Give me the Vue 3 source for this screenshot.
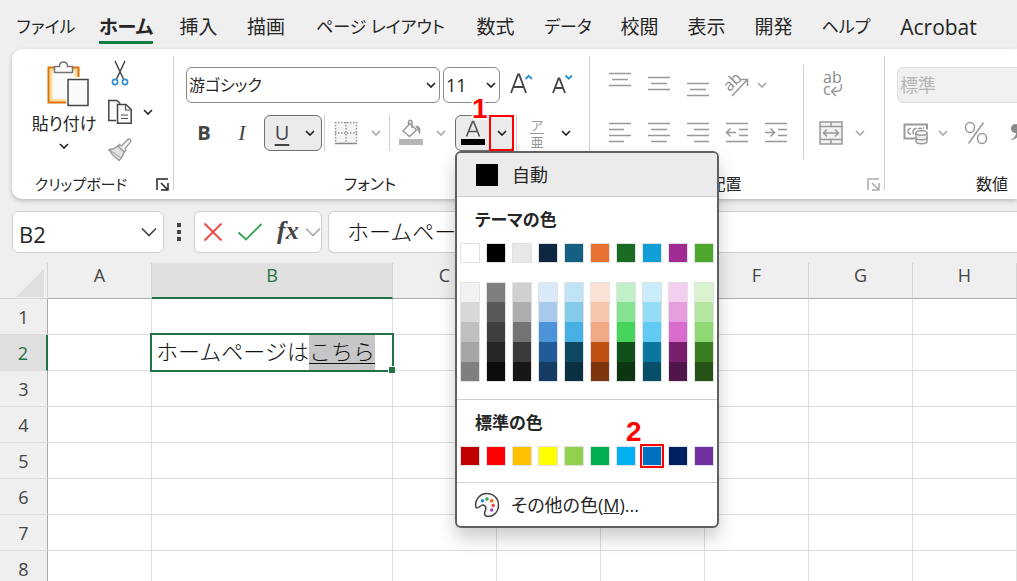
<script setup>
import { ref } from 'vue'

const tabs = [
  { name: 'ファイル', kind: 'kana' },
  { name: 'ホーム' },
  { name: '挿入' },
  { name: '描画' },
  { name: 'ページ レイアウト', kind: 'kana' },
  { name: '数式' },
  { name: 'データ', kind: 'kana' },
  { name: '校閲' },
  { name: '表示' },
  { name: '開発' },
  { name: 'ヘルプ', kind: 'kana' },
  { name: 'Acrobat', kind: 'latin' }
]
const activeTab = ref('ホーム')
const cellName = ref('B2')
const formula = ref('ホームページはこちら')

const columns = ['A', 'B', 'C', 'D', 'E', 'F', 'G', 'H']
const rows = [1, 2, 3, 4, 5, 6, 7, 8]

const themeColors = ['#ffffff', '#000000', '#e8e8e8', '#0e2841', '#156082', '#e97132', '#196b24', '#0f9ed5', '#a02b93', '#4ea72e']
const shades = [
  ['#f2f2f2', '#d8d8d8', '#bfbfbf', '#a5a5a5', '#7f7f7f'],
  ['#7f7f7f', '#595959', '#3f3f3f', '#262626', '#0c0c0c'],
  ['#d0d0d0', '#aeaeae', '#747474', '#3a3a3a', '#171717'],
  ['#dae9f8', '#a6c9ec', '#4d93d9', '#215c98', '#153d64'],
  ['#c0e4f5', '#83caeb', '#45b0e1', '#104861', '#0a3041'],
  ['#fbe2d5', '#f6c6ad', '#f1a983', '#be5014', '#7e350e'],
  ['#c1f0c8', '#84e291', '#47d45a', '#12501b', '#0c3512'],
  ['#caedfb', '#95dcf7', '#61cbf3', '#0b769f', '#074f69'],
  ['#f2ceef', '#e49edd', '#d86dcd', '#78206e', '#501549'],
  ['#daf2d0', '#b5e6a2', '#8ed973', '#3b7d23', '#275317']
]
const standardColors = ['#c00000', '#ff0000', '#ffc000', '#ffff00', '#92d050', '#00b050', '#00b0f0', '#0070c0', '#002060', '#7030a0']
const picked = '#0070c0'
</script>

<template>
  <div class="app">
    <svg class="defs" aria-hidden="true">
      <symbol id="chev" viewBox="0 0 10 6"><path d="M1 1l4 4 4-4" fill="none" stroke="currentColor" stroke-width="1.7" /></symbol>
      <symbol id="launch" viewBox="0 0 13 13">
        <path d="M1 12V1h11M5 5l6 6M12 5v7H5" fill="none" stroke="currentColor" stroke-width="1.5" />
      </symbol>
    </svg>

    <nav class="tabs">
      <button v-for="t in tabs" :key="t.name" class="tab" :class="[t.kind, { active: t.name === activeTab }]" @click="activeTab = t.name">
        <span>{{ t.name }}</span>
      </button>
    </nav>

    <section class="ribbon">
      <div class="group clipboard">
        <div class="clip-body">
          <button class="paste">
            <svg width="42" height="46" viewBox="0 0 42 46">
              <path d="M1.500 6.500h30v35h-30z" fill="#fbdc98" stroke="#e0730d" stroke-width="2" />
              <path d="M5.500 10h22v28h-22z" fill="#fafafa" />
              <path d="M7.500 5.500h5c0-6 8-6 8 0h5v6h-18z" fill="#fafafa" stroke="#777" stroke-width="1.500" />
              <path d="M19 16h23v30H19z" fill="#fff" />
              <path d="M21 18.500h20v26H21z" fill="#fafafa" stroke="#444" stroke-width="1.500" />
            </svg>
            <span>貼り付け</span>
            <svg class="chev"><use href="#chev" /></svg>
          </button>
          <div class="clip-tools">
            <button class="tool" aria-label="切り取り">
              <svg width="24" height="26" viewBox="0 0 24 26">
                <path d="M7 0l8.500 18M17 0L8.500 18" fill="none" stroke="#444" stroke-width="1.500" />
                <circle cx="7" cy="21" r="2.600" fill="#fff" stroke="#2b8fd4" stroke-width="1.600" />
                <circle cx="17" cy="21" r="2.600" fill="#fff" stroke="#2b8fd4" stroke-width="1.600" />
              </svg>
            </button>
            <button class="tool" aria-label="コピー">
              <svg width="24" height="26" viewBox="0 0 24 26">
                <path d="M8 21.500H.8V1.500h8l3.500 3" fill="#fafafa" stroke="#444" stroke-width="1.500" />
                <path d="M9.500 5.500h8.500l5.200 5v13.700H9.500z" fill="#fafafa" stroke="#444" stroke-width="1.500" />
                <path d="M17.500 6v5h5M13 16h7M13 19.500h7" fill="none" stroke="#555" stroke-width="1.200" />
              </svg>
              <svg class="chev"><use href="#chev" /></svg>
            </button>
            <button class="tool" aria-label="書式のコピー" disabled>
              <svg width="24" height="24" viewBox="0 0 24 24">
                <path d="M13.500 8l6-6.300c2-1.800 4.500.6 2.800 2.600L17 10.500l1 1.500-1.800 2-6.400-6 1.700-1.700z" fill="#f4f4f4" stroke="#999" stroke-width="1.300" />
                <path d="M9.800 8l6.400 6c-1 4-2.500 6-5 8.500C7 19.500 3.500 17 1 11.500c3.500.2 6-1 8.800-3.500z" fill="#e2e2e2" stroke="#999" stroke-width="1.300" />
                <path d="M1.500 12l11 7.500" stroke="#999" />
              </svg>
            </button>
          </div>
        </div>
        <footer><span>クリップボード</span><button class="launch" aria-label="クリップボードの詳細"><svg><use href="#launch" /></svg></button></footer>
      </div>

      <div class="group font">
        <div class="row">
          <label class="select family"><select aria-label="フォント名"><option>游ゴシック</option></select><svg class="chev"><use href="#chev" /></svg></label>
          <label class="select size"><select aria-label="フォント サイズ"><option>11</option></select><svg class="chev"><use href="#chev" /></svg></label>
          <button class="grow" aria-label="拡大">
            <svg width="26" height="28" viewBox="0 0 26 28"><path d="M3 22L10 3.500h1.200L18 22M5.500 16h10" fill="none" stroke="#444" stroke-width="1.800" /><path d="M17.500 8l3.200-3.200L24 8" fill="none" stroke="#2b8fd4" stroke-width="1.800" /></svg>
          </button>
          <button class="grow" aria-label="縮小">
            <svg width="26" height="28" viewBox="0 0 26 28"><path d="M5 22L10.500 7.500h1L17 22M7 17h8" fill="none" stroke="#444" stroke-width="1.800" /><path d="M17.500 4.500l3.200 3.200L24 4.500" fill="none" stroke="#2b8fd4" stroke-width="1.800" /></svg>
          </button>
        </div>
        <div class="row second">
          <button class="letter bold">B</button>
          <button class="letter italic">I</button>
          <div class="split framed underline">
            <button class="letter">U</button>
            <button class="drop" aria-label="下線の種類"><svg class="chev"><use href="#chev" /></svg></button>
          </div>
          <i class="rule"></i>
          <div class="split off">
            <button class="glyph" aria-label="罫線">
              <svg width="24" height="24" viewBox="0 0 24 24"><path d="M1 1h22v22H1z" fill="#f4f4f4" /><path d="M1 1.500h22M1 12h22M1.500 1v20M12 1v20M22.500 1v20" fill="none" stroke="#999" stroke-width="1.500" stroke-dasharray="1.500 1.500" /><path d="M1 22.500h22" stroke="#888" stroke-width="1.500" /></svg>
            </button>
            <button class="drop" aria-label="罫線の種類"><svg class="chev"><use href="#chev" /></svg></button>
          </div>
          <i class="rule"></i>
          <div class="split off">
            <button class="glyph" aria-label="塗りつぶし">
              <svg width="24" height="26" viewBox="0 0 24 26"><path d="M0 19h24v6H0z" fill="#b5b5b5" /><path d="M4 11l7-7.500 6.500 6.500-7 6.500zM9.500 5.500V2.500c0-3 3.500-3 3.500 0V8" fill="none" stroke="#999" stroke-width="1.500" /><path d="M16 5.500c5.500 0 6.500 4 4.500 9.500-1-3-1.500-5.500-4.500-9.500z" fill="#999" /></svg>
            </button>
            <button class="drop" aria-label="塗りつぶしの色"><svg class="chev"><use href="#chev" /></svg></button>
          </div>
          <div class="split framed fontcolor">
            <button class="glyph" aria-label="フォントの色">
              <svg width="24" height="26" viewBox="0 0 24 26"><path d="M5.500 16.500L11.500 1.500h1l6 15M7.500 11.500h9" fill="none" stroke="#555" stroke-width="1.700" /><path d="M0 19h24v6H0z" /></svg>
            </button>
            <button class="drop marked" aria-label="フォントの色の一覧"><svg class="chev"><use href="#chev" /></svg></button>
            <b class="callout one">1</b>

            <div class="menu">
              <button class="auto"><i></i><span>自動</span></button>
              <h2>テーマの色</h2>
              <div class="swatches">
                <button v-for="c in themeColors" :key="c" class="swatch" :style="{ background: c }" :aria-label="c"></button>
              </div>
              <div class="swatches shades">
                <div v-for="(list, n) in shades" :key="n" class="stack">
                  <button v-for="c in list" :key="c" :style="{ background: c }" :aria-label="c"></button>
                </div>
              </div>
              <h2 class="ruled">標準の色</h2>
              <div class="swatches">
                <button v-for="c in standardColors" :key="c" class="swatch" :class="{ picked: c === picked }" :style="{ background: c }" :aria-label="c"></button>
              </div>
              <b class="callout two">2</b>
              <button class="more">
                <svg width="26" height="26" viewBox="0 0 26 26">
                  <path d="M2 15.500C0 8 6 1.500 13 1.500c6.500 0 11.500 5 11.500 11.500S20 24.500 14 24.500c-3.500 0-4-2.500-3-5s1.500-5.500-1.500-6.500-4 4-7.500 2.500z" fill="#fafafa" stroke="#444" stroke-width="1.500" />
                  <circle cx="8.500" cy="8.800" r="1.800" fill="#2b8fd4" /><circle cx="13" cy="7" r="1.800" fill="#3aa757" /><circle cx="17.700" cy="8.800" r="1.800" fill="#e0730d" /><circle cx="19.200" cy="13.500" r="1.800" fill="#ef4b4b" /><circle cx="17.700" cy="18" r="1.800" fill="#a845b8" />
                </svg>
                <span>その他の色(<u>M</u>)...</span>
              </button>
            </div>
          </div>
          <i class="rule"></i>
          <div class="split ruby">
            <button class="phonetic" aria-label="ふりがな"><span>ア</span><span>亜</span></button>
            <button class="drop" aria-label="ふりがなの設定"><svg class="chev"><use href="#chev" /></svg></button>
          </div>
        </div>
        <footer><span>フォント</span><button class="launch" aria-label="フォントの詳細"><svg><use href="#launch" /></svg></button></footer>
      </div>

      <div class="group align">
        <div class="align-body">
          <div class="align-left">
            <div class="row">
              <button class="al" aria-label="上揃え"><svg width="24" height="30" viewBox="0 0 24 30"><path d="M1 3.500h22M4 9.500h16M1 15.500h22" /></svg></button>
              <button class="al" aria-label="上下中央揃え"><svg width="24" height="30" viewBox="0 0 24 30"><path d="M1 7.500h22M4 13.500h16M1 19.500h22" /></svg></button>
              <button class="al" aria-label="下揃え"><svg width="24" height="30" viewBox="0 0 24 30"><path d="M1 13.500h22M4 19.500h16M1 25.500h22" /></svg></button>
              <button class="al" aria-label="方向">
                <svg width="26" height="28" viewBox="0 0 26 28"><text x="-9" y="4" transform="translate(9 12) rotate(-45)" class="ab">ab</text><path d="M8 25L23 9M16.500 8.500H23.500V15" /></svg>
              </button>
              <button class="tiny" aria-label="方向の一覧"><svg class="chev"><use href="#chev" /></svg></button>
            </div>
            <div class="row second">
              <button class="al" aria-label="左揃え"><svg width="24" height="24" viewBox="0 0 24 24"><path d="M1 2.500h22M1 8.500h15M1 14.500h22M1 20.500h15" /></svg></button>
              <button class="al" aria-label="中央揃え"><svg width="24" height="24" viewBox="0 0 24 24"><path d="M1 2.500h22M4 8.500h16M1 14.500h22M4 20.500h16" /></svg></button>
              <button class="al" aria-label="右揃え"><svg width="24" height="24" viewBox="0 0 24 24"><path d="M1 2.500h22M8 8.500h15M1 14.500h22M8 20.500h15" /></svg></button>
              <button class="al" aria-label="インデントを減らす"><svg width="24" height="24" viewBox="0 0 24 24"><path d="M1 2.500h22M14 8.500h9M14 14.500h9M1 20.500h22M2 11.500h9M5.500 7.500l-4 4 4 4" /></svg></button>
              <button class="al" aria-label="インデントを増やす"><svg width="24" height="24" viewBox="0 0 24 24"><path d="M1 2.500h22M14 8.500h9M14 14.500h9M1 20.500h22M1 11.500h9M6.500 7.500l4 4-4 4" /></svg></button>
            </div>
          </div>
          <div class="align-right">
            <div class="row">
              <button class="al" aria-label="折り返し"><svg width="24" height="28" viewBox="0 0 24 28"><text x="4" y="12" class="ab">ab</text><text x="4" y="24" class="ab">c</text><path d="M22 13c2.500 8-4 7.500-9.500 7.500M17 16l-4.500 4.500 4.500 4.500" /></svg></button>
            </div>
            <div class="row second">
              <button class="al" aria-label="セルを結合"><svg width="24" height="24" viewBox="0 0 24 24"><path d="M1 1h22v22H1z" fill="#f2f2f2" /><path d="M1 5.500h22M1 18.500h22M12 1v4.500M12 18.500V23M4.500 12h15M8 8.500L4.500 12 8 15.500M16 8.500l3.500 3.500-3.500 3.500" /></svg></button>
              <button class="tiny" aria-label="結合の種類"><svg class="chev"><use href="#chev" /></svg></button>
            </div>
          </div>
        </div>
        <footer><span>配置</span><button class="launch" aria-label="配置の詳細"><svg><use href="#launch" /></svg></button></footer>
      </div>

      <div class="group number">
        <div class="row"><label class="select format"><select aria-label="表示形式" disabled><option>標準</option></select></label></div>
        <div class="row second">
          <button class="num" aria-label="通貨"><svg width="26" height="26" viewBox="0 0 26 26"><path d="M12 18.500H1.500v-14h22.500v5" stroke-width="2" /><path d="M8 8.500c-4-.8-4 6.300 0 5.500M13.500 8.500c-4-.8-4 5-2.500 5.500M15 9c1-.9 3-.9 4 0M20 7.500l1 1" /><path d="M13 13v8.500c0 3 11 3 11 0V13" fill="#eee" /><path d="M13 17.500c0 3 11 3 11 0" /><ellipse cx="18.500" cy="13" rx="5.500" ry="2.200" fill="#fff" /></svg></button>
          <button class="tiny" aria-label="通貨の種類"><svg class="chev"><use href="#chev" /></svg></button>
          <button class="num" aria-label="パーセント"><svg width="24" height="24" viewBox="0 0 24 24"><path d="M19.500 1.500l-15 21" /><ellipse cx="6" cy="6.500" rx="4.500" ry="5" /><ellipse cx="18" cy="17.500" rx="4.500" ry="5" /></svg></button>
          <button class="num" aria-label="桁区切り"><svg width="14" height="24" viewBox="0 0 14 24"><path d="M8 3a4.500 4.500 0 1 0 1 9c0 3-2 5-6 7.500 7-1.500 10.500-5 10.500-10.500C13.500 5 11 3 8 3z" fill="#8a8a8a" stroke="none" /></svg></button>
        </div>
        <footer><span>数値</span><button class="launch" aria-label="数値の詳細"></button></footer>
      </div>
    </section>

    <section class="bar">
      <div class="namebox">
        <input v-model="cellName" aria-label="名前ボックス">
        <button aria-label="名前の一覧"><svg width="16" height="10" viewBox="0 0 16 10"><path d="M1 1.500l7 7 7-7" fill="none" stroke="#444" stroke-width="1.700" /></svg></button>
      </div>
      <div class="dots"><i></i><i></i><i></i></div>
      <div class="actions">
        <button aria-label="キャンセル"><svg width="20" height="20" viewBox="0 0 20 20"><path d="M1.500 1.500l17 17M18.500 1.500l-17 17" stroke="#ef4444" stroke-width="1.800" /></svg></button>
        <button aria-label="入力"><svg width="26" height="20" viewBox="0 0 26 20"><path d="M1.500 10.500l7.500 7L24.500 2" fill="none" stroke="#38a055" stroke-width="1.800" /></svg></button>
        <button class="fx" aria-label="関数の挿入">fx</button>
        <button class="fx-more" aria-label="関数の一覧"><svg width="16" height="10" viewBox="0 0 16 10"><path d="M1 1.500l7 7 7-7" fill="none" stroke="#aaa" stroke-width="1.700" /></svg></button>
      </div>
      <input v-model="formula" class="formula" aria-label="数式バー">
    </section>

    <div class="sheet">
      <table>
        <thead>
          <tr>
            <th class="corner"><svg width="28" height="28" viewBox="0 0 28 28"><path d="M28 0v28H0z" fill="#dedede" /></svg></th>
            <th v-for="c in columns" :key="c" scope="col" :class="{ wide: c === 'B', on: c === 'B' }">{{ c }}</th>
          </tr>
        </thead>
        <tbody>
          <tr v-for="r in rows" :key="r">
            <th scope="row" :class="{ on: r === 2 }">{{ r }}</th>
            <td v-for="c in columns" :key="c" :class="{ editing: r === 2 && c === 'B' }">
              <template v-if="r === 2 && c === 'B'"><span>ホームページは</span><mark>こちら</mark></template>
            </td>
          </tr>
        </tbody>
      </table>
    </div>
  </div>
</template>

<style>
body { margin: 0; overflow: hidden; }
</style>

<style scoped>
.app {
  height: 100vh;
  display: flex;
  flex-direction: column;
  overflow: hidden;
  background: #efefef;
  color: #262626;
  font: 17px/24px "Open Sans", "Noto Sans CJK JP", sans-serif;
}
.app * { box-sizing: border-box; }
.defs { position: absolute; width: 0; height: 0; }
button, input, select { font: inherit; color: inherit; border: 0; padding: 0; margin: 0; background: none; }
button { display: flex; align-items: center; justify-content: center; }
svg { display: block; flex: none; overflow: visible; }
.chev { width: 10px; height: 6px; }

.tabs {
  flex: none;
  display: grid;
  grid-template-columns: 82px 78px 67px 68px 161px 69px 76px 67px 67px 67px 78px 107px;
  height: 49px;
  padding-left: 5px;
  font-feature-settings: "palt";
}
.tab { font-size: 19px; line-height: 28px; padding-top: 8px; white-space: nowrap; }
.tab.kana { font-size: 17px; }
.tab.latin { font-size: 21px; }
.tab span { border-bottom: 3px solid transparent; }
.tab.active { font-weight: 700; }
.tab.active span { border-color: #107c41; border-radius: 1px; }

.ribbon {
  flex: none;
  position: relative;
  z-index: 2;
  display: flex;
  height: 150px;
  margin-left: 12px;
  background: #fff;
  border-radius: 10px 0 0 10px;
  box-shadow: 0 2px 5px rgba(0, 0, 0, 0.22);
  white-space: nowrap;
}
.group { position: relative; flex: none; display: flex; flex-direction: column; padding-top: 18px; }
.group::after { content: ""; position: absolute; right: 0; top: 7px; bottom: 9px; width: 1px; background: #cfcfcf; }
.row { display: flex; align-items: center; height: 36px; }
.second { margin-top: 12px; }
footer { display: flex; align-items: center; height: 24px; margin-top: auto; margin-bottom: 3px; font-size: 16px; font-feature-settings: "palt"; }
footer span { flex: 1; text-align: center; }
.launch { width: 24px; height: 24px; }
.launch svg { width: 13px; height: 13px; }
.off { color: #aaa; }

.clipboard { width: 162px; padding-top: 12px; }
.clipboard footer { font-size: 15px; }
.clip-body { display: flex; padding-left: 16px; }
.paste { flex-direction: column; justify-content: flex-start; width: 72px; height: 104px; font-feature-settings: "palt"; }
.paste svg:first-child { margin-left: 8px; }
.paste span { margin: 5px 0 7px; }
.clip-tools { display: flex; flex-direction: column; }
.tool { height: 38px; padding-left: 8px; gap: 11px; justify-content: flex-start; }
.tool:first-child { height: 32px; align-items: flex-start; }

.font { width: 416px; z-index: 1; }
.font .row { padding-left: 12px; gap: 2px; }
.select { position: relative; display: block; height: 36px; }
.select select { appearance: none; width: 100%; height: 100%; padding: 0 2px; border: 1px solid #8a8a8a; border-radius: 6px; background: #fff; font-size: 18px; font-feature-settings: "palt"; }
.select .chev { position: absolute; right: 4px; top: 15px; }
.family { width: 254px; }
.family select { font-size: 16px; }
.size { width: 57px; margin-left: 1px; }
.grow { width: 38px; height: 36px; }
.letter { width: 36px; height: 36px; font-size: 20px; color: #444; }
.bold { font-weight: 700; }
.italic { font: italic 22px/24px "Liberation Serif", serif; }
.rule { width: 1px; height: 36px; background: #cfcfcf; }
.split { position: relative; display: flex; width: 60px; height: 36px; }
.split .glyph { width: 38px; }
.split .drop { flex: 1; }
.framed { border: 1px solid #707070; border-radius: 6px; background: #ebebeb; width: 58px; }
.underline { margin-left: 2px; }
.underline .letter { height: 34px; width: 34px; text-decoration: underline; text-underline-offset: 4px; text-decoration-thickness: 2px; }
.fontcolor { width: 59px; margin-left: 1px; }
.fontcolor .glyph { width: 34px; }
.marked { outline: 2px solid #f00; outline-offset: -1px; }
.ruby { width: 57px; }
.phonetic { flex-direction: column; width: 36px; color: #999; font-size: 13px; line-height: 14px; font-family: "Noto Sans CJK JP", sans-serif; }
.phonetic span { height: 14px; line-height: 12px; }
.phonetic span:last-child { height: 15px; line-height: 15px; border-top: 1px solid #999; }
.callout { position: absolute; color: #f00; font: 700 28px/28px "Liberation Sans", Arial, sans-serif; text-shadow: 0 0 2px #fff, 2px 0 1px #fff, -2px 0 1px #fff, 0 2px 1px #fff; }
.one { left: 16px; top: -21px; }
.two { left: 169px; top: 265px; }

.menu {
  position: absolute;
  z-index: 3;
  left: -1px;
  top: 35px;
  width: 264px;
  border: 2px solid #606060;
  border-radius: 6px;
  background: #fff;
  box-shadow: 0 10px 18px rgba(0, 0, 0, 0.2);
  font-feature-settings: "palt";
}
.auto { width: 100%; height: 44px; padding-left: 19px; gap: 14px; justify-content: flex-start; background: #ebebeb; border-bottom: 1px solid #cfcfcf; border-radius: 4px 4px 0 0; font-size: 18px; }
.auto i { width: 22px; height: 22px; background: #000; }
h2 { margin: 0; padding: 11px 18px; font-size: 17px; line-height: 24px; }
.ruled { margin-top: 17px; border-top: 1px solid #cfcfcf; }
.swatches { display: flex; gap: 6px; padding: 0 3px; }
.swatch { width: 20px; height: 20px; border: 1px solid #e2e2e2; }
.shades { margin-top: 19px; }
.stack { width: 20px; border: 1px solid #e2e2e2; }
.stack button { width: 18px; height: 20px; }
.stack button:first-child, .stack button:last-child { height: 19px; }
.picked { outline: 2px solid #f00; }
.more { width: 100%; height: 44px; margin-top: 16px; padding-left: 17px; gap: 11px; justify-content: flex-start; border-top: 1px solid #cfcfcf; font-size: 18px; }

.align { width: 295px; color: #aaa; }
.align footer, .number footer { color: #262626; }
.align .launch { color: #aaa; }
.align-body { display: flex; }
.align-left { width: 214px; padding-left: 10px; position: relative; }
.align-left::after { content: ""; position: absolute; right: 0; top: -2px; width: 1px; height: 94px; background: #cfcfcf; }
.al { width: 39px; height: 36px; }
.al svg, .num svg { fill: none; stroke: #999; stroke-width: 1.5; }
.ab { fill: #8a8a8a; stroke: none; font-size: 16px; font-family: "Open Sans", sans-serif; }
.tiny { width: 12px; height: 36px; color: #aaa; }
.align-right { padding-left: 7px; }
.align-right .tiny { margin-left: 4px; }

.number { width: 238px; }
.number .row { padding-left: 12px; }
.format { width: 214px; }
.format select { background: #f0f0f0; border-color: #e0e0e0; color: #b5b5b5; opacity: 1; }
.num { width: 38px; height: 36px; }
.number .tiny { margin: 0 8px 0 2px; }

.bar { flex: none; display: flex; height: 42px; margin: 12px 0 10px 12px; }
.namebox, .actions, .formula { border: 1px solid #cfcfcf; border-radius: 6px; background: #fff; }
.namebox { display: flex; width: 152px; padding: 0 6px; }
.namebox input { flex: 1; min-width: 0; padding-top: 4px; font-size: 22px; outline: 0; }
.dots { display: flex; flex-direction: column; align-items: center; justify-content: center; gap: 3px; width: 30px; }
.dots i { width: 4px; height: 4px; background: #444; }
.actions { display: flex; width: 128px; padding: 0 2px 0 8px; gap: 14px; }
.fx { font: italic 700 26px/30px "Liberation Serif", serif; color: #444; padding-bottom: 2px; }
.fx-more { margin-left: auto; }
.actions .fx + .fx-more { margin-left: -8px; }
.formula { flex: 1; min-width: 0; margin-left: 6px; padding: 0 18px 5px; border-right: 0; border-radius: 6px 0 0 6px; font-size: 22px; font-weight: 300; color: #111; font-family: "Noto Sans CJK JP", sans-serif; outline: 0; }

.sheet { flex: 1; min-height: 0; overflow: hidden; }
table { border-collapse: separate; border-spacing: 0; }
th, td { padding: 0; height: 36px; min-width: 104px; border: 0 solid #dedede; border-width: 0 1px 1px 0; }
th { font-weight: 400; font-size: 18px; line-height: 24px; color: #444; background: #efefef; }
thead th { border-color: #d4d4d4; border-bottom-color: #aaa; padding-bottom: 11px; }
thead .wide { min-width: 241px; }
thead .on { background: #e0e0e0; color: #217346; border-bottom: 2px solid #217346; padding-bottom: 10px; }
thead .corner, tbody th { min-width: 48px; width: 48px; }
.corner svg { margin: 4px 0 0 16px; }
thead .corner { padding: 0; border-bottom-color: #d4d4d4; }
tbody th { border-right-color: #aaa; }
tbody .on { background: #e0e0e0; color: #217346; border-right: 2px solid #217346; }
td { background: #fff; font: 300 22px/31px "Noto Sans CJK JP", sans-serif; color: #111; white-space: nowrap; }
.editing { position: relative; padding-left: 4px; }
.editing::before { content: ""; position: absolute; inset: -2px; border: 2px solid #217346; }
.editing::after { content: ""; position: absolute; right: -3px; bottom: -3px; width: 6px; height: 6px; background: #217346; border: solid #fff; border-width: 1px 0 0 1px; }
mark { display: inline-block; height: 35px; color: inherit; background: #c6c6c6; text-decoration: underline; text-decoration-thickness: 1px; text-underline-offset: 3px; vertical-align: top; }
.editing span { display: inline-block; vertical-align: top; }
</style>
